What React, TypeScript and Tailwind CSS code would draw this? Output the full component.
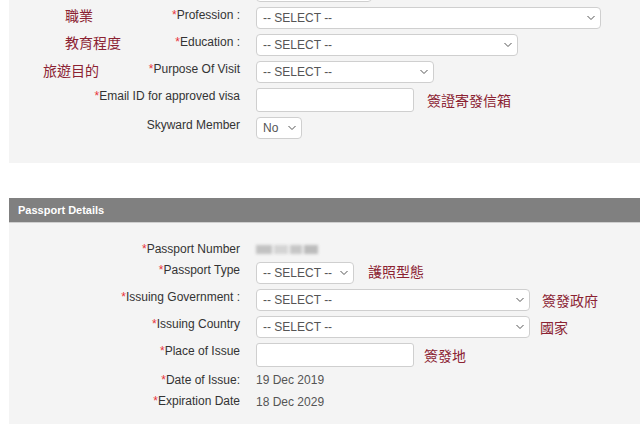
import React from 'react';

const Chevron = () => (
  <svg width="8" height="5" viewBox="0 0 8 5" className="absolute right-[5px] top-1/2 -translate-y-1/2">
    <path d="M0.5 0.5 L4 4 L7.5 0.5" fill="none" stroke="#555" strokeWidth="1" />
  </svg>
);

const Select = ({ w, text = '-- SELECT --' }: { w: string; text?: string }) => (
  <div className={`relative h-[22px] ${w} shrink-0 rounded-[4px] border border-[#cfcfcf] bg-white pl-[6px] text-[12px] leading-[20px] text-[#555]`}>
    {text}
    <Chevron />
  </div>
);

const Input = () => (
  <div className="h-[24px] w-[158px] shrink-0 rounded-[3px] border border-[#cfcfcf] bg-white" />
);

const Note = ({ children, className = '' }: { children: React.ReactNode; className?: string }) => (
  <span className={`font-['Noto_Sans_CJK_TC',sans-serif] text-[14px] leading-[16px] text-[#8b2232] ${className}`}>
    {children}
  </span>
);

interface RowProps {
  label: string;
  required?: boolean;
  note?: React.ReactNode;
  children: React.ReactNode;
}

const Row = ({ label, required = true, note, children }: RowProps) => (
  <div className="flex items-start">
    <div className="flex w-[231px] shrink-0 items-start">
      {note}
      <div className="flex-1 text-right text-[12px] leading-[16px] text-[#333]">
        {required && <span className="text-[#e8333a]">*</span>}
        {label}
      </div>
    </div>
    <div className="ml-[16px] flex items-center">{children}</div>
  </div>
);

export default function App() {
  return (
    <div className="h-[436px] w-[640px] overflow-hidden bg-white font-['Liberation_Sans',Arial,sans-serif]">
      {/* Personal details (scrolled) */}
      <div className="ml-[9px] h-[163px] bg-[#f4f4f4]">
        <div className="flex flex-col gap-[5px] pt-[7px]">
          <div className="-mt-[27px] ml-[247px]">
            <Select w="w-[116px]" text="" />
          </div>
          <Row label="Profession :" note={<Note className="ml-[56px]">職業</Note>}>
            <Select w="w-[345px]" />
          </Row>
          <Row label="Education :" note={<Note className="ml-[56px]">教育程度</Note>}>
            <Select w="w-[262px]" />
          </Row>
          <Row label="Purpose Of Visit" note={<Note className="ml-[34px] mt-[1px]">旅遊目的</Note>}>
            <Select w="w-[178px]" />
          </Row>
          <Row label="Email ID for approved visa">
            <Input />
            <Note className="ml-[13px]">簽證寄發信箱</Note>
          </Row>
          <Row label="Skyward Member" required={false}>
            <Select w="w-[46px]" text="No" />
          </Row>
        </div>
      </div>

      {/* Passport details */}
      <div className="ml-[9px] mt-[35px]">
        <div className="h-[25px] border-b border-[#cfcfcf] bg-[#808080] pl-[9px] text-[11px] font-bold leading-[24px] text-white">
          Passport Details
        </div>
        <div className="flex h-[201px] flex-col gap-[5px] bg-[#f4f4f4] pt-[18px]">
          <Row label="Passport Number">
            <div className="flex h-[16px] items-center gap-[2px] blur-[1.5px]">
              <div className="h-[9px] w-[16px] bg-[#c2c2c2]" />
              <div className="h-[9px] w-[14px] bg-[#d4d4d4]" />
              <div className="h-[9px] w-[12px] bg-[#c6c6c6]" />
              <div className="h-[9px] w-[14px] bg-[#bcbcbc]" />
            </div>
          </Row>
          <Row label="Passport Type">
            <Select w="w-[98px]" />
            <Note className="ml-[14px] -mt-[5px]">護照型態</Note>
          </Row>
          <Row label="Issuing Government :">
            <Select w="w-[274px]" />
            <Note className="ml-[12px]">簽發政府</Note>
          </Row>
          <Row label="Issuing Country">
            <Select w="w-[274px]" />
            <Note className="ml-[10px]">國家</Note>
          </Row>
          <Row label="Place of Issue">
            <Input />
            <Note className="ml-[10px]">簽發地</Note>
          </Row>
          <Row label="Date of Issue:">
            <span className="text-[12px] leading-[16px] text-[#555]">19 Dec 2019</span>
          </Row>
          <Row label="Expiration Date">
            <span className="mt-[1px] text-[12px] leading-[16px] text-[#555]">18 Dec 2029</span>
          </Row>
        </div>
      </div>
    </div>
  );
}
